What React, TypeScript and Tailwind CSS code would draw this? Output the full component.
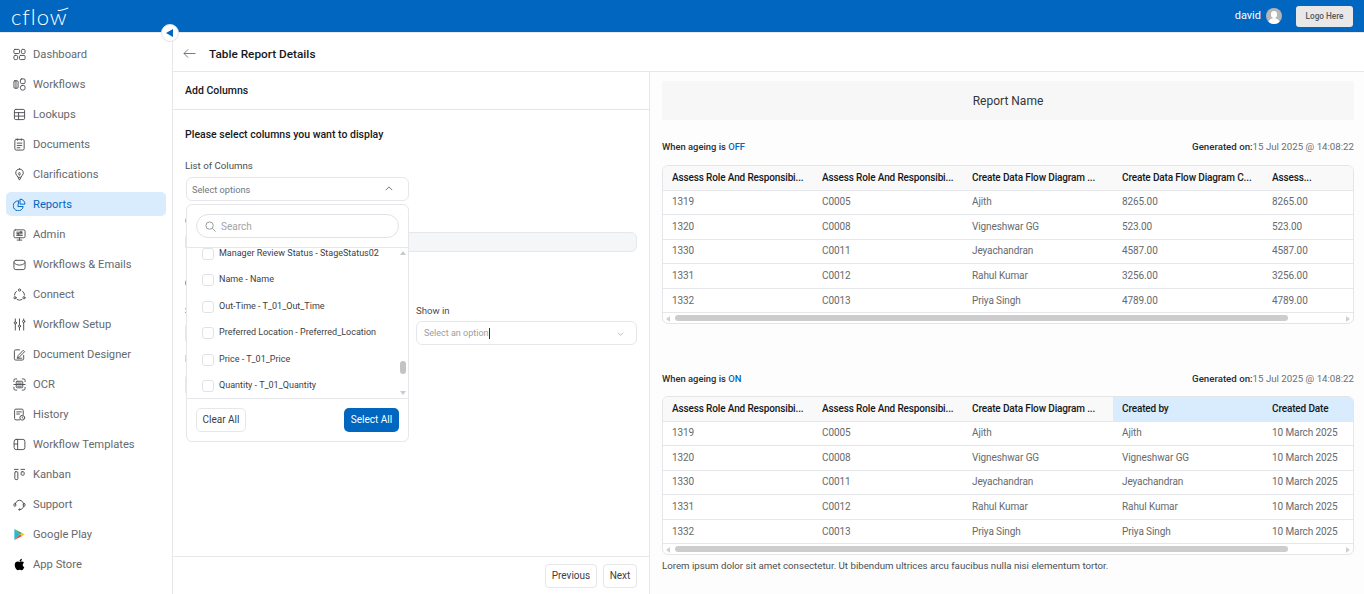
import React from "react";
import { FaApple } from "react-icons/fa";

const S = ({ children, className = "text-[#505357]" }: { children: React.ReactNode; className?: string }) => (
  <svg viewBox="0 0 14 14" fill="none" stroke="currentColor" strokeWidth="1.05" strokeLinecap="round" strokeLinejoin="round" className={`w-[13px] h-[13px] shrink-0 ${className}`}>
    {children}
  </svg>
);

const icons: Record<string, React.ReactNode> = {
  Dashboard: <S><rect x="1" y="1.5" width="6" height="4.5" rx="1"/><rect x="9" y="1.5" width="4" height="4.5" rx="1.4"/><rect x="1" y="8" width="4" height="4.5" rx="1.4"/><rect x="7" y="8" width="6" height="4.5" rx="1"/></S>,
  Workflows: <S><rect x="1" y="3" width="4.5" height="8" rx="1"/><rect x="8" y="1" width="5" height="5" rx="1.2"/><rect x="8" y="8" width="5" height="5" rx="2"/><path d="M3.2 3v8"/></S>,
  Lookups: <S><rect x="1.5" y="1.5" width="11" height="11" rx="1.5"/><path d="M1.5 5h11M1.5 8.7h11M6 5v7.5"/></S>,
  Documents: <S><rect x="2" y="1.5" width="10" height="11.5" rx="1.5"/><path d="M5 1v1.5M9 1v1.5M4.5 5.5h5M4.5 8h5M4.5 10.5h3"/></S>,
  Clarifications: <S><path d="M7 1a4.2 4.2 0 0 0-2.6 7.4L5.4 10h3.2l1-1.6A4.2 4.2 0 0 0 7 1z"/><path d="M5.6 10.5 7 13l1.4-2.5M7 5l1 1.4L7 8 6 6.4z"/></S>,
  Reports: <S className="text-[#0066bf]"><path d="M5.7 3A5.4 5.4 0 1 0 11 9.2H5.7z"/><path d="M8 1.2a5 5 0 0 1 4.8 5.4H8z"/></S>,
  Admin: <S><rect x="1" y="2" width="12" height="8.5" rx="1.5"/><path d="M4.5 13h5M7 10.5V13M4 4.5h6M4 6.3h6M4 8h6"/><circle cx="8.5" cy="4.5" r=".7"/><circle cx="5.5" cy="6.3" r=".7"/></S>,
  "Workflows & Emails": <S><rect x="1" y="2.5" width="12" height="10" rx="2"/><path d="M1 5c2 2.2 4 2.6 6 2.6S11 7.2 13 5"/></S>,
  Connect: <S><circle cx="7" cy="2.2" r="1.2"/><circle cx="2.2" cy="10.5" r="1.2"/><circle cx="11.8" cy="10.5" r="1.2"/><path d="M3.6 3.6a5 5 0 0 0-2 4M10.4 3.6a5 5 0 0 1 2 4M4.5 12.5a5 5 0 0 0 5 0"/></S>,
  "Workflow Setup": <S><path d="M2.5 1v3M2.5 6.5V13M7 1v6.5M7 10v3M11.5 1v1.5M11.5 5v8"/><circle cx="2.5" cy="5.2" r="1.2"/><circle cx="7" cy="8.8" r="1.2"/><circle cx="11.5" cy="3.7" r="1.2"/></S>,
  "Document Designer": <S><path d="M7 2H3a1.5 1.5 0 0 0-1.5 1.5v8A1.5 1.5 0 0 0 3 13h7a1.5 1.5 0 0 0 1.5-1.5V8"/><path d="M5 10.2l.5-2L11 2.5l1.5 1.5-5.5 5.6zM4.5 11h5"/></S>,
  OCR: <S><path d="M1 4V2.5A1.5 1.5 0 0 1 2.5 1H4M10 1h1.5A1.5 1.5 0 0 1 13 2.5V4M1 10v1.5A1.5 1.5 0 0 0 2.5 13H4M10 13h1.5a1.5 1.5 0 0 0 1.5-1.5V10"/><rect x="3.5" y="3.5" width="7" height="7" rx="1"/><path d="M1 7h12M5 5.5h4M5 8.8h4"/></S>,
  History: <S><path d="M7 12.8H3.2a1.5 1.5 0 0 1-1.5-1.5V2.7a1.5 1.5 0 0 1 1.5-1.5h6.3a1.5 1.5 0 0 1 1.5 1.5V7"/><path d="M4 4.2h5M4 6.5h3"/><circle cx="10" cy="10.5" r="2.6"/><path d="M10 9.5v1l.8.6"/></S>,
  "Workflow Templates": <S><rect x="1.2" y="1.5" width="11.6" height="11" rx="2.2"/><path d="M5 1.5v11M1.2 6.5H5"/></S>,
  Kanban: <S><path d="M1.5 1.5h4M8.5 1.5h4"/><rect x="2" y="4" width="3.2" height="8.5" rx="1"/><rect x="8.8" y="4" width="3.2" height="3.8" rx="1"/></S>,
  Support: <S><path d="M2.5 7a4.5 4.5 0 0 1 9 0M7 12.5a4.5 4.5 0 0 0 4.5-4"/><rect x="1" y="6" width="2" height="3" rx="1"/><rect x="11" y="6" width="2" height="3" rx="1"/><circle cx="7" cy="12.4" r=".8"/></S>,
  "Google Play": <svg viewBox="0 0 14 14" className="w-[13px] h-[13px] shrink-0"><path d="M1.5 1 7.6 7l-6.1 6z" fill="#29b6d8"/><path d="M1.5 1l8.3 4.3L7.6 7z" fill="#3fae5a"/><path d="M1.5 13l8.3-4.3L7.6 7z" fill="#e5443d"/><path d="M9.8 5.3 12.8 7l-3 1.7L7.6 7z" fill="#f5c518"/></svg>,
  "App Store": <FaApple className="w-[13px] h-[13px] shrink-0 text-black" />,
};

const nav = ["Dashboard","Workflows","Lookups","Documents","Clarifications","Reports","Admin","Workflows & Emails","Connect","Workflow Setup","Document Designer","OCR","History","Workflow Templates","Kanban","Support","Google Play","App Store"];

const heads = ["Assess Role And Responsibi...","Assess Role And Responsibi...","Create Data Flow Diagram ...","Create Data Flow Diagram C...","Assess..."];
const heads2 = ["Assess Role And Responsibi...","Assess Role And Responsibi...","Create Data Flow Diagram ...","Created by","Created Date"];
const rows1 = [
  ["1319","C0005","Ajith","8265.00","8265.00"],
  ["1320","C0008","Vigneshwar GG","523.00","523.00"],
  ["1330","C0011","Jeyachandran","4587.00","4587.00"],
  ["1331","C0012","Rahul Kumar","3256.00","3256.00"],
  ["1332","C0013","Priya Singh","4789.00","4789.00"],
];
const rows2 = rows1.map((r) => [r[0], r[1], r[2], r[2], "10 March 2025"]);

function Table({ head, rows, hl }: { head: string[]; rows: string[][]; hl?: boolean }) {
  return (
    <div className="h-[159px] w-[692px] rounded-[6px] border border-[#e3e5e8] bg-white overflow-hidden flex flex-col">
      <div className="flex h-[24.5px] shrink-0 bg-[#f9f9f9] border-b border-[#e5e7eb]">
        {head.map((h, i) => (
          <div key={i} className={`w-[150px] shrink-0 pl-[9px] flex items-center text-[10px] tracking-[-0.14px] font-medium text-[#15181c] whitespace-nowrap ${hl && i > 2 ? "bg-[#d8ecfd]" : ""}`}>{h}</div>
        ))}
      </div>
      {rows.map((r, ri) => (
        <div key={ri} className="flex h-[24.6px] shrink-0 border-b border-[#e5e7eb]">
          {r.map((c, i) => (
            <div key={i} className="w-[150px] shrink-0 pl-[9px] pb-[1px] flex items-center text-[10px] tracking-[-0.1px] text-[#666a6e] whitespace-nowrap">{c}</div>
          ))}
        </div>
      ))}
      <div className="flex-1 relative">
        <div className="absolute left-[3px] top-[3px] w-0 h-0 border-y-[3px] border-y-transparent border-r-[4px] border-r-[#d0d0d0]" />
        <div className="absolute left-[12px] top-[2px] w-[613px] h-[6px] rounded-full bg-[#cdcdcd]" />
        <div className="absolute right-[3px] top-[3px] w-0 h-0 border-y-[3px] border-y-transparent border-l-[4px] border-l-[#d0d0d0]" />
      </div>
    </div>
  );
}

function Caption({ label, state }: { label: string; state: string }) {
  return (
    <div className="flex justify-between items-center h-[14px]">
      <div className="text-[9.4px] font-medium text-[#2a2d30]">{label} <span className="text-[#0066bf]">{state}</span></div>
      <div className="text-[9.7px]"><span className="font-medium text-[#2a2d30]">Generated on:</span><span className="text-[#6b6f73]">15 Jul 2025 @ 14:08:22</span></div>
    </div>
  );
}

const options: [string, number][] = [
  ["Manager Review Status - StageStatus02", 5],
  ["Name - Name", 31],
  ["Out-Time - T_01_Out_Time", 58],
  ["Preferred Location - Preferred_Location", 84],
  ["Price - T_01_Price", 111],
  ["Quantity - T_01_Quantity", 137],
];

export default function App() {
  return (
    <div className="w-[1364px] h-[594px] overflow-hidden bg-white relative" style={{ fontFamily: "Roboto, sans-serif" }}>
      <header className="h-[32px] bg-[#0066bf] flex items-center justify-between pl-[11px] pr-[11px]">
        <div className="relative flex items-center text-white h-[20px] mt-[2px]">
          <span className="text-[22px] font-light tracking-[1px] leading-none" style={{ fontFamily: "Lato, sans-serif" }}>cflow</span>
          <svg viewBox="0 0 16 6" className="absolute left-[46px] top-[0px] w-[12px] h-[5px]" fill="none" stroke="white" strokeWidth="1.4"><path d="M1 4c4 1 9-1 14-3"/></svg>
        </div>
        <div className="flex items-center">
          <span className="text-[11px] text-white mr-[5px]">david</span>
          <div className="w-[16px] h-[16px] rounded-full bg-[#b4b6b8] overflow-hidden relative mr-[14px] -mt-[1px]">
            <div className="absolute left-[5px] top-[3px] w-[6px] h-[7px] rounded-full bg-white" />
            <div className="absolute left-[2px] top-[10px] w-[12px] h-[7px] rounded-t-full bg-white" />
          </div>
          <div className="w-[57px] h-[21px] rounded-[3px] bg-[#e8e8e8] flex items-center justify-center text-[8.2px] text-[#55585c] font-medium">Logo Here</div>
        </div>
      </header>
      <div className="absolute left-0 top-[32px] w-full h-px bg-[#e8ebee]" />

      <div className="flex h-[562px]">
        <aside className="w-[173px] shrink-0 border-r border-[#e5e7eb] pt-[10px] pl-[6px] pr-[6px]">
          {nav.map((n) => {
            const active = n === "Reports";
            return (
              <div key={n} className={`h-[24px] mb-[6px] rounded-[5px] flex items-center pl-[7px] gap-[7px] text-[11.2px] ${active ? "bg-[#d8ecfd] text-[#0066bf]" : "text-[#66696d]"}`}>
                {icons[n]}
                <span className="pt-[2px]">{n}</span>
              </div>
            );
          })}
        </aside>

        <main className="flex-1 flex flex-col min-w-0">
          <div className="h-[40px] shrink-0 border-b border-[#e5e7eb] flex items-center pl-[10px] pt-[5px]">
            <svg viewBox="0 0 14 12" className="w-[13px] h-[11px] text-[#6b6f73] -mt-[1px]" fill="none" stroke="currentColor" strokeWidth="1"><path d="M13.5 6H1M5.5 1.5 1 6l4.5 4.5"/></svg>
            <span className="ml-[13px] pt-[2px] text-[11.8px] font-medium text-[#15181c]">Table Report Details</span>
          </div>
          <div className="flex flex-1 min-h-0">
            <section className="w-[477px] shrink-0 border-r border-[#e5e7eb] flex flex-col relative">
              <div className="h-[38px] shrink-0 border-b border-[#e5e7eb] pl-[12px] pt-[1px] flex items-center text-[10.5px] font-medium text-[#15181c]">Add Columns</div>
              <div className="flex-1 relative">
                <div className="absolute left-[12px] top-[18px] text-[10.5px] font-medium text-[#15181c] leading-[14px]">Please select columns you want to display</div>
                <div className="absolute left-[12px] top-[49px] text-[9.7px] text-[#4a4e53] leading-[14px]">List of Columns</div>
                <div className="absolute left-[13px] top-[67px] w-[223px] h-[24px] rounded-[6px] border border-[#e5e7eb] flex items-center justify-between pl-[5px] pr-[15px] text-[9.2px] text-[#73777c]">
                  <span className="pt-[1px]">Select options</span>
                  <svg viewBox="0 0 10 6" className="w-[8px] h-[5px] text-[#55585c] -mt-[2px]" fill="none" stroke="currentColor" strokeWidth="1"><path d="M1 5 5 1l4 4"/></svg>
                </div>
                <div className="absolute left-[12px] top-[104px] text-[9.7px] text-[#4a4e53] leading-[14px]">C</div>
                <div className="absolute left-[12px] top-[122px] w-[452px] h-[20px] rounded-[6px] border border-[#e5e7eb] bg-[#f5f6f8]" />
                <div className="absolute left-[12px] top-[167px] text-[10.5px] font-medium text-[#15181c] leading-[14px]">C</div>
                <div className="absolute left-[12px] top-[194px] text-[9.7px] text-[#4a4e53] leading-[14px]">S</div>
                <div className="absolute left-[12px] top-[211px] w-[200px] h-[24px] rounded-[6px] border border-[#e5e7eb]" />
                <div className="absolute left-[243px] top-[194px] text-[9.6px] text-[#4a4e53] leading-[14px]">Show in</div>
                <div className="absolute left-[243px] top-[211px] w-[221px] h-[24px] rounded-[6px] border border-[#e5e7eb] flex items-center justify-between pl-[7px] pr-[12px] text-[9px] text-[#9a9ea3]">
                  <span className="flex items-center pt-[1px]">Select an option<span className="w-px h-[11px] bg-[#333]" /></span>
                  <svg viewBox="0 0 10 6" className="w-[7px] h-[4px] text-[#9a9ea3] mt-[1px]" fill="none" stroke="currentColor" strokeWidth="1"><path d="M1 1l4 4 4-4"/></svg>
                </div>
                <div className="absolute left-[12px] top-[242px] text-[9.7px] text-[#4a4e53] leading-[14px]">D</div>
                <div className="absolute left-[12px] top-[263px] w-[200px] h-[24px] rounded-[6px] border border-[#e5e7eb]" />

                <div className="absolute left-[13px] top-[94px] w-[223px] h-[238px] rounded-[6px] border border-[#e5e7eb] bg-white flex flex-col">
                  <div className="h-[43px] shrink-0 border-b border-[#e5e7eb] px-[9px] pt-[9px]">
                    <div className="h-[24px] rounded-full border border-[#dfe2e6] flex items-center pl-[8px] gap-[5px] text-[10px] text-[#a0a4a8]">
                      <svg viewBox="0 0 12 12" className="w-[11px] h-[11px] text-[#8f9397]" fill="none" stroke="currentColor" strokeWidth="1"><circle cx="5" cy="5" r="4"/><path d="M8 8l3.5 3.5"/></svg>
                      Search
                    </div>
                  </div>
                  <div className="relative h-[150px] shrink-0 overflow-hidden">
                    {options.map(([o, y]) => (
                      <div key={o} className="absolute left-[15px] flex items-center gap-[5px] h-[12px] text-[9px] text-[#3c4045] whitespace-nowrap" style={{ top: y - 5 }}>
                        <span className="w-[12px] h-[12px] rounded-[3px] border border-[#dfe2e6] bg-white shrink-0 -mt-[1px]" />
                        {o}
                      </div>
                    ))}
                    <div className="absolute right-[2px] top-[3px] w-0 h-0 border-x-[3px] border-x-transparent border-b-[4px] border-b-[#c9c9c9]" />
                    <div className="absolute right-[2px] top-[113px] w-[6px] h-[13px] rounded-full bg-[#c4c4c4]" />
                    <div className="absolute right-[2px] top-[143px] w-0 h-0 border-x-[3px] border-x-transparent border-t-[4px] border-t-[#c9c9c9]" />
                  </div>
                  <div className="flex-1 border-t border-[#e5e7eb] px-[9px] flex items-center justify-between">
                    <div className="w-[50px] h-[24px] rounded-[5px] border border-[#e5e7eb] flex items-center justify-center pb-[1px] text-[10px] text-[#3c4045]">Clear All</div>
                    <div className="w-[55px] h-[24px] rounded-[5px] bg-[#0066bf] flex items-center justify-center pb-[1px] text-[10px] text-white">Select All</div>
                  </div>
                </div>
              </div>
              <div className="h-[38px] shrink-0 border-t border-[#e5e7eb] flex justify-end items-center pr-[12px] gap-[6px]">
                <div className="w-[52px] h-[24px] rounded-[4px] border border-[#e5e7eb] flex items-center justify-center text-[10px] text-[#3c4045]">Previous</div>
                <div className="w-[34px] h-[24px] rounded-[4px] border border-[#e5e7eb] flex items-center justify-center text-[10px] text-[#3c4045]">Next</div>
              </div>
            </section>

            <section className="flex-1 bg-[#fdfdfd] px-[12px] pt-[9px] pr-[10px]">
              <div className="h-[39px] bg-[#f7f7f8] flex items-center justify-center text-[12px] text-[#33363a]">Report Name</div>
              <div className="mt-[20px]"><Caption label="When ageing is" state="OFF" /></div>
              <div className="mt-[11px]"><Table head={heads} rows={rows1} /></div>
              <div className="mt-[48px]"><Caption label="When ageing is" state="ON" /></div>
              <div className="mt-[10px]"><Table head={heads2} rows={rows2} hl /></div>
              <div className="mt-[4px] text-[9.7px] leading-[14px] text-[#4a4e53] whitespace-nowrap">Lorem ipsum dolor sit amet consectetur. Ut bibendum ultrices arcu faucibus nulla nisi elementum tortor.</div>
            </section>
          </div>
        </main>
      </div>

      <div className="absolute left-[161px] top-[24px] w-[18px] h-[18px] rounded-full bg-white border border-[#dfe3e7] flex items-center justify-center">
        <div className="w-0 h-0 border-y-[4px] border-y-transparent border-r-[7px] border-r-[#0066bf] mr-[1px]" />
      </div>
    </div>
  );
}
